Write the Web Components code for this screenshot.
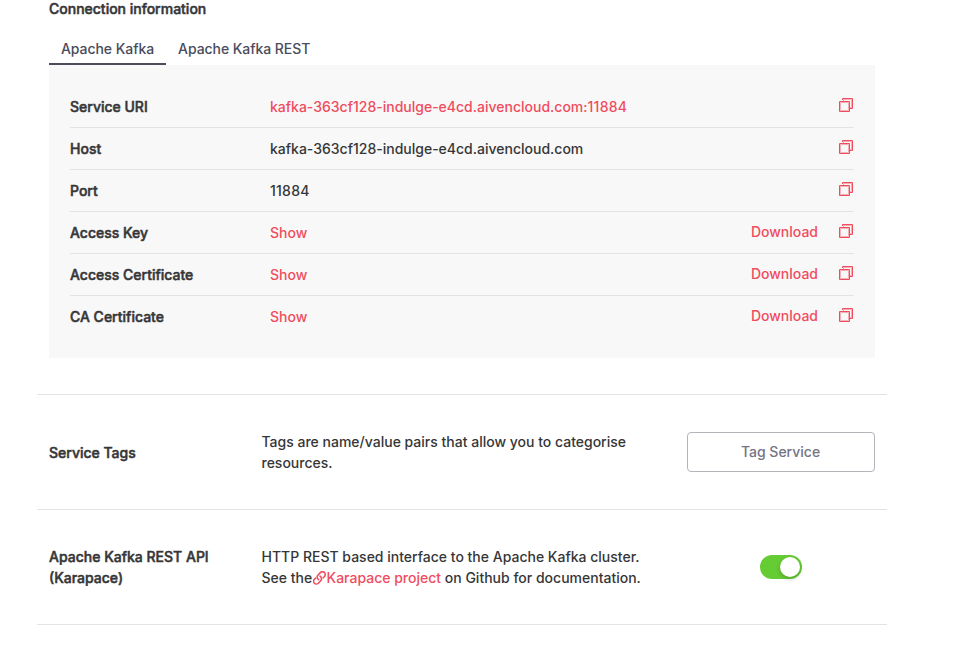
<!DOCTYPE html>
<html lang="en">
<head>
<meta charset="utf-8">
<title>Connection information</title>
<style>
body { margin: 0; background: #fff; font: 500 14px/21px Inter, sans-serif; color: #363637; --red: #f04c5e; --line: #e3e3e4; }
</style>
</head>
<body>
<service-overview></service-overview>
<script>
const define = (name, html, setup) => customElements.define(name, class extends HTMLElement {
  constructor() {
    super();
    const t = document.createElement('template');
    t.innerHTML = html;
    this.attachShadow({ mode: 'open' }).append(t.content.cloneNode(true));
  }
  connectedCallback() { if (setup) setup(this, this.shadowRoot); }
});

define('bold-label', `<style>
:host { display: block; -webkit-text-stroke: .5px currentColor; white-space: pre-line; }
</style><slot></slot>`);

define('text-link', `<style>
:host { color: var(--red); cursor: pointer; }
</style><slot></slot>`);

define('copy-icon', `<style>
:host { display: block; width: 14px; height: 14px; color: var(--red); }
svg { display: block; }
</style><svg width="14" height="14" viewBox="0 0 14 14" fill="none" stroke="currentColor">
<path d="M4.5 3V1.5H12.5V9.5H11" stroke-opacity=".42"/>
<path d="M1.5 4.5H9.5V12.5H1.5Z" stroke-opacity=".42"/>
<path d="M3.5 2V.5H13.5V10.5H11"/>
<path d="M.5 3.5H10.5V13.5H.5Z"/>
</svg>`);

define('link-icon', `<style>
:host { display: inline-block; width: 14px; height: 14px; margin: 0 -.3px 0 .7px; vertical-align: -1.5px; color: var(--red); }
svg { display: block; }
</style><svg width="14" height="14" viewBox="0 0 14 14" fill="none" stroke="currentColor" stroke-width="1.6" stroke-linecap="round" stroke-linejoin="round">
<path d="M5.6 8.6C4 7.4 3.7 5.3 5 4L7.4 1.6C8.5.5 10.3.5 11.4 1.5S12.5 4.4 11.5 5.5L10.2 6.8"/>
<path d="M7.1 5.2C8.7 6.4 9 8.5 7.7 9.8L5.3 12.2C4.2 13.3 2.4 13.3 1.4 12.3S.4 9.4 1.4 8.3L2.6 7.1"/>
</svg>`);

define('tab-item', `<style>
:host { display: block; box-sizing: border-box; height: 32px; padding: 5px 12px 0; color: #4a4b5b; border-bottom: 2px solid transparent; letter-spacing: -.06px; }
:host([active]) { border-color: #4a4b5b; }
</style><slot></slot>`);

define('port-number', `<style>
:host { letter-spacing: .25px; }
</style><slot></slot>`);

define('info-row', `<style>
:host { display: grid; box-sizing: border-box; height: 42px; grid-template-columns: 200px 1fr auto auto; align-items: center; border-bottom: 1px solid var(--line); padding-right: 1px; }
:host(:last-child) { border-color: transparent; }
copy-icon { margin: -3px 0 0 21px; }
.download { margin-top: -2px; }
</style><bold-label></bold-label><span><slot></slot></span><span class="download"><slot name="action"></slot></span><copy-icon></copy-icon>`,
(host, root) => { root.querySelector('bold-label').textContent = host.getAttribute('label'); });

define('setting-row', `<style>
:host { display: grid; box-sizing: border-box; height: 115px; grid-template-columns: 212.5px 1fr 188px; align-items: center; padding: 0 12px; border-bottom: 1px solid var(--line); }
.action { display: flex; justify-content: center; }
</style><slot name="label"></slot><div><slot></slot></div><div class="action"><slot name="action"></slot></div>`);

define('outline-button', `<style>
:host { display: block; width: 100%; }
button { display: block; width: 100%; height: 40px; box-sizing: border-box; border: 1px solid #b4b4bb; border-radius: 4px; background: #fff; font: inherit; color: #747482; padding: 0 1px 2px 0; }
</style><button><slot></slot></button>`);

define('toggle-switch', `<style>
:host { display: flex; box-sizing: border-box; width: 42px; height: 24px; border-radius: 12px; background: #66cc33; padding: 2px; justify-content: flex-end; }
i { width: 20px; height: 20px; border-radius: 50%; background: #fff; box-shadow: 0 2px 5px rgba(0,0,0,.2); }
</style><i></i>`);

define('service-overview', `<style>
:host { display: block; width: 850px; margin-left: 37px; }
.connection { padding: 0 12px 36px; border-bottom: 1px solid var(--line); }
.title { margin-top: -2px; }
.tabs { display: flex; margin-top: 14px; }
.panel { background: #f8f8f8; height: 293px; box-sizing: border-box; padding: 21px 21px 0; }
</style>
<section class="connection">
<bold-label class="title">Connection information</bold-label>
<div class="tabs"><tab-item active>Apache Kafka</tab-item><tab-item>Apache Kafka REST</tab-item></div>
<div class="panel">
<info-row label="Service URI"><text-link>kafka-363cf128-indulge-e4cd.aivencloud.com:<port-number>11884</port-number></text-link></info-row>
<info-row label="Host">kafka-363cf128-indulge-e4cd.aivencloud.com</info-row>
<info-row label="Port"><port-number>11884</port-number></info-row>
<info-row label="Access Key"><text-link>Show</text-link><text-link slot="action">Download</text-link></info-row>
<info-row label="Access Certificate"><text-link>Show</text-link><text-link slot="action">Download</text-link></info-row>
<info-row label="CA Certificate"><text-link>Show</text-link><text-link slot="action">Download</text-link></info-row>
</div>
</section>
<setting-row><bold-label slot="label">Service Tags</bold-label>Tags are name/value pairs that allow you to categorise<br>resources.<outline-button slot="action">Tag Service</outline-button></setting-row>
<setting-row><bold-label slot="label">Apache Kafka REST API<br>(Karapace)</bold-label>HTTP REST based interface to the Apache Kafka cluster.<br>See the<link-icon></link-icon><text-link>Karapace project</text-link> on Github for documentation.<toggle-switch slot="action"></toggle-switch></setting-row>
`);
</script>
</body>
</html>
